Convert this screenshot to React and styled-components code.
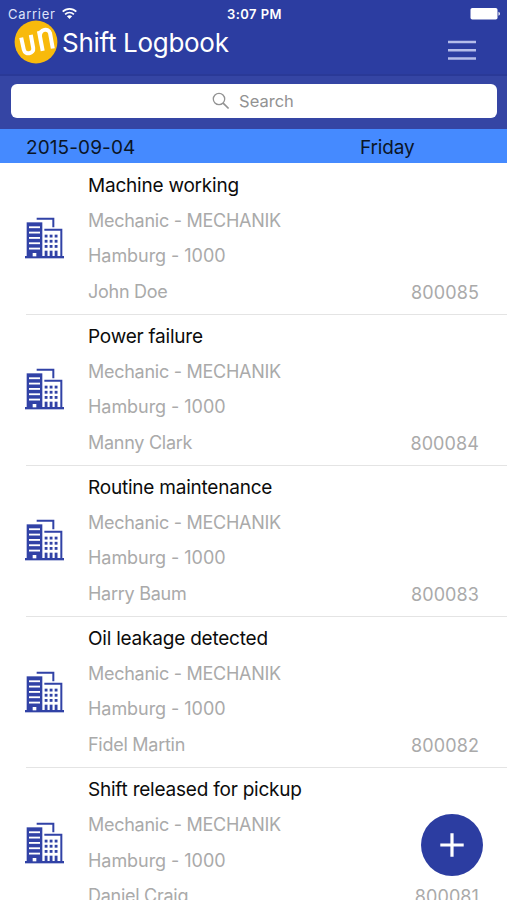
import React from 'react';
import styled, { createGlobalStyle } from 'styled-components';

const entries = [
  { id: '800085', title: 'Machine working', person: 'John Doe' },
  { id: '800084', title: 'Power failure', person: 'Manny Clark' },
  { id: '800083', title: 'Routine maintenance', person: 'Harry Baum' },
  { id: '800082', title: 'Oil leakage detected', person: 'Fidel Martin' },
  { id: '800081', title: 'Shift released for pickup', person: 'Daniel Craig' },
];

const WifiIcon = () => (
  <svg width="15" height="12" viewBox="0 0 15 12" fill="none" stroke="#fff" strokeWidth="1.7">
    <path d="M0.7 3.7C4.4 -0.1 10.6 -0.1 14.3 3.7" />
    <path d="M3.1 6.3C5.6 3.9 9.4 3.9 11.9 6.3" />
    <path d="M4.9 8.2C6.4 6.8 8.6 6.8 10.1 8.2L7.5 10.9Z" fill="#fff" stroke="none" />
  </svg>
);

const BatteryIcon = () => (
  <svg width="31" height="12" viewBox="0 0 31 12" fill="#fff">
    <rect x="0.5" y="0" width="27" height="11.5" rx="1.8" />
    <path d="M28.5 3.8C30.4 4.4 30.4 7.2 28.5 7.8Z" />
  </svg>
);

const SearchIcon = () => (
  <svg width="18" height="18" viewBox="0 0 18 18" fill="none" stroke="#929292" strokeWidth="1.3">
    <circle cx="7" cy="7" r="5.7" />
    <path d="M11.1 11.1L16.6 16.5" strokeWidth="1.7" />
  </svg>
);

const Logo = () => (
  <svg width="44" height="44" viewBox="0 0 44 44" fill="none">
    <circle cx="22" cy="22" r="21.4" fill="#f8ba0c" />
    <g stroke="#fff" strokeWidth="4">
      <path d="M7.2 17.6L9.8 29.6C11.2 35.6 20.2 33.9 19.2 28L16.8 14.8" />
      <path d="M28.7 30.9L24.9 11" />
      <path d="M26 16C25.8 9 34.6 7.6 36 13L38.8 28.5" />
    </g>
  </svg>
);

const slots = [184, 200, 216, 232, 248];
const windowColumns = [134, 149, 164];
const windowRows = [209, 224.5, 240];

const BuildingIcon = () => (
  <svg width="41" height="43" viewBox="72 153 123 129" fill="#3142a6">
    <path d="M110 158H163V187H157V164H110Z" />
    <path d="M80 172H127V275H80Z" />
    <path d="M133 191H187V275H181V197H133Z" />
    <rect x="75" y="273" width="117" height="7" />
    {slots.map(y => (
      <rect key={y} x="87" y={y} width="33" height="5.5" fill="#fff" />
    ))}
    <rect x="98" y="264" width="11" height="10" fill="#fff" />
    {windowColumns.map(x => (
      <React.Fragment key={x}>
        {windowRows.map(y => (
          <rect key={y} x={x} y={y} width="8.5" height="8.5" />
        ))}
        <rect x={x} y="257" width="8.5" height="18" />
      </React.Fragment>
    ))}
  </svg>
);

const App = () => (
  <Screen>
    <GlobalStyle />
    <StatusBar>
      <Carrier>
        Carrier
        <WifiIcon />
      </Carrier>
      <Clock>3:07 PM</Clock>
      <Battery>
        <BatteryIcon />
      </Battery>
    </StatusBar>
    <NavBar>
      <Logo />
      <PageTitle>Shift Logbook</PageTitle>
      <MenuButton aria-label="Menu">
        <svg width="28" height="20" viewBox="0 0 28 20" stroke="#b5bdea" strokeWidth="2.6">
          <path d="M0 2H28M0 10.3H28M0 18.5H28" />
        </svg>
      </MenuButton>
    </NavBar>
    <SearchBar>
      <SearchField>
        <SearchIcon />
        <SearchLabel>Search</SearchLabel>
      </SearchField>
    </SearchBar>
    <DateHeader>
      <DateText>2015-09-04</DateText>
      <DayText>Friday</DayText>
    </DateHeader>
    <List>
      {entries.map(({ id, title, person }) => (
        <Entry key={id}>
          <EntryIcon>
            <BuildingIcon />
          </EntryIcon>
          <EntryBody>
            <EntryTitle>{title}</EntryTitle>
            <EntryLine>Mechanic - MECHANIK</EntryLine>
            <EntryLine $spacing="-0.05px">Hamburg - 1000</EntryLine>
            <EntryFooter>
              <EntryLine>{person}</EntryLine>
              <EntryNumber $spacing="0.1px">{id}</EntryNumber>
            </EntryFooter>
          </EntryBody>
        </Entry>
      ))}
    </List>
    <AddButton aria-label="Add">
      <svg width="24" height="24" viewBox="0 0 24 24" stroke="#fff" strokeWidth="3.2">
        <path d="M12 0.3V23.7M0.3 12H23.7" />
      </svg>
    </AddButton>
  </Screen>
);

const GlobalStyle = createGlobalStyle`
  * {
    box-sizing: border-box;
  }

  body {
    margin: 0;
    overflow: hidden;
    background: #fff;
    font-family: Inter, 'Liberation Sans', sans-serif;
  }

  svg {
    display: block;
    flex: none;
  }
`;

const Screen = styled.div`
  position: relative;
  display: flex;
  flex-direction: column;
  width: 100%;
  height: 900px;
  overflow: hidden;
`;

const StatusBar = styled.div`
  display: grid;
  grid-template-columns: 1fr auto 1fr;
  flex: none;
  height: 20px;
  padding: 8px 6px 0 8px;
  background: #2c3da1;
  color: #fff;
  font-size: 13px;
  line-height: 12px;
`;

const Carrier = styled.div`
  display: flex;
  gap: 6px;
  color: #dfe3fa;
  letter-spacing: 0.7px;
`;

const Clock = styled.div`
  font-weight: 600;
  letter-spacing: 0.45px;
`;

const Battery = styled.div`
  display: flex;
  justify-content: flex-end;
`;

const NavBar = styled.div`
  display: flex;
  align-items: flex-start;
  flex: none;
  height: 56px;
  padding: 0 31px 0 14px;
  background: #2c3da1;
  border-bottom: 2px solid #2a3997;
`;

const PageTitle = styled.div`
  flex: 1;
  padding: 6px 0 0 4px;
  color: #fff;
  font-size: 26px;
  letter-spacing: -0.3px;
  line-height: 33px;
`;

const MenuButton = styled.div`
  padding-top: 20px;
`;

const SearchBar = styled.div`
  flex: none;
  height: 53px;
  padding: 8px 10px 11px 11px;
  background: #3545a4;
`;

const SearchField = styled.div`
  display: flex;
  align-items: center;
  justify-content: center;
  gap: 9px;
  height: 34px;
  padding-right: 2px;
  border-radius: 6px;
  background: #fff;
`;

const SearchLabel = styled.span`
  color: #929292;
  font-size: 16.5px;
`;

const DateHeader = styled.div`
  display: flex;
  align-items: center;
  flex: none;
  height: 34px;
  padding: 3px 0 0 26px;
  background: #458aff;
  color: #0b1526;
  font-size: 19px;
`;

const DateText = styled.div`
  width: 334px;
  letter-spacing: 0.1px;
`;

const DayText = styled.div`
  letter-spacing: -0.15px;
`;

const List = styled.div`
  flex: none;
  padding-top: 0.8px;
`;

const Entry = styled.div`
  display: flex;
  height: 151.1px;
  margin-left: 26px;
  border-bottom: 1px solid #e4e4e4;
`;

const EntryIcon = styled.div`
  width: 62px;
  padding-top: 52.5px;

  svg {
    margin-left: -2px;
  }
`;

const EntryBody = styled.div`
  flex: 1;
  padding-top: 5px;
`;

const EntryTitle = styled.div`
  color: #0c0c0c;
  font-size: 19px;
  letter-spacing: -0.22px;
  line-height: 34px;
`;

const EntryLine = styled.div`
  color: #aaa;
  font-size: 18px;
  letter-spacing: ${({ $spacing }) => $spacing || '-0.27px'};
  line-height: 35.4px;
`;

const EntryFooter = styled.div`
  display: flex;
  justify-content: space-between;
  padding-right: 28px;
`;

const EntryNumber = styled(EntryLine)`
  padding-top: 1px;
`;

const AddButton = styled.div`
  position: absolute;
  top: 814px;
  left: 421px;
  display: flex;
  align-items: center;
  justify-content: center;
  width: 62px;
  height: 62px;
  border-radius: 50%;
  background: #2c3da1;
`;

export default App;
